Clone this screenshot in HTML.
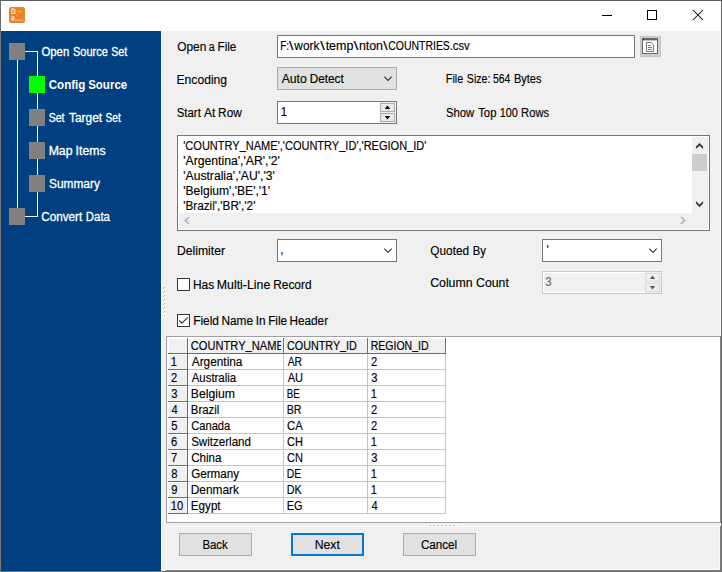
<!DOCTYPE html>
<html>
<head>
<meta charset="utf-8">
<title>Config Source</title>
<style>
*{box-sizing:border-box;margin:0;padding:0}
html,body{width:722px;height:572px;overflow:hidden;background:#fff}
body{position:relative;font-family:"Liberation Sans",sans-serif;font-size:12px;color:#000}
.a{position:absolute}
.t{position:absolute;left:0;width:722px;height:14px;line-height:14px;white-space:nowrap}
.w{position:absolute;left:0;top:0;display:block;line-height:14px;white-space:pre;transform-origin:0 0;-webkit-text-stroke:0.15px}
.u{position:relative;top:-1px}
.sq{position:absolute;width:16px;height:17px;background:#808080}
.ln{position:absolute;background:#fff}
.btn{position:absolute;background:#e1e1e1;border:1px solid #adadad}
.inp{position:absolute;background:#fff;border:1px solid #767676}
.hc{position:absolute;background:#f0f0f0;border-top:1px solid #fff;border-left:1px solid #fff}
.dk{position:absolute;background:#6e6e6e}
.lt{position:absolute;background:#c4c4c4}
svg{position:absolute;overflow:visible}
</style>
</head>
<body>

<!-- window surfaces -->
<div class="a" id="titlebar" style="left:0;top:0;width:722px;height:31px;background:#fff"></div>
<div class="a" id="main" style="left:161px;top:31px;width:559px;height:540px;background:#f0f0f0"></div>
<div class="a" style="left:720px;top:31px;width:1px;height:540px;background:#fff"></div>
<div class="a" style="left:161px;top:31px;width:1px;height:540px;background:#fcfcfc"></div>
<div class="a" id="side" style="left:1px;top:31px;width:160px;height:540px;background:#004080"></div>

<!-- title bar icon -->
<svg id="appicon" style="left:9px;top:7px" width="16" height="16" viewBox="0 0 16 16">
 <rect x="0" y="0" width="16" height="16" rx="2.3" ry="2.3" fill="#e98125"/>
 <path d="M2.3 1.4H5l1.4 1.4V7H2.3Z" fill="#fbe6d2"/>
 <path d="M3.2 2.6H4.6L5.4 3.6V6H3.2Z" fill="#ee9a4f"/>
 <ellipse cx="3.9" cy="9.7" rx="2.1" ry="0.8" fill="#f6c9a0"/>
 <rect x="1.9" y="10.4" width="4" height="3.4" rx="0.8" fill="#f2b47f"/>
 <rect x="3.3" y="10.6" width="1.3" height="2.3" fill="#fdf1e6"/>
 <rect x="8" y="4.1" width="4.6" height="1" fill="#f3b988"/>
 <rect x="7.6" y="7.6" width="1.3" height="1" fill="#f3b988"/>
 <rect x="6.6" y="12.6" width="7.4" height="1.2" fill="#f3b988"/>
</svg>

<!-- window controls -->
<svg style="left:602px;top:10px" width="110" height="12" viewBox="0 0 110 12">
 <path d="M0 5.5H10" stroke="#000" stroke-width="1" fill="none"/>
 <rect x="45.5" y="0.5" width="9" height="9" stroke="#000" stroke-width="1" fill="none"/>
 <path d="M91 0L101 10M101 0L91 10" stroke="#000" stroke-width="1.05" fill="none"/>
</svg>

<!-- sidebar tree -->
<div class="ln" style="left:17px;top:59px;width:1px;height:150px"></div>
<div class="ln" style="left:37px;top:51px;width:1px;height:166px"></div>
<div class="ln" style="left:25px;top:51px;width:12px;height:1px"></div>
<div class="ln" style="left:25px;top:216px;width:12px;height:1px"></div>
<div class="sq" style="left:9px;top:43px"></div>
<div class="sq" style="left:29px;top:76px;background:#00ff00"></div>
<div class="sq" style="left:29px;top:109px"></div>
<div class="sq" style="left:29px;top:142px"></div>
<div class="sq" style="left:29px;top:175px"></div>
<div class="sq" style="left:9px;top:208px"></div>

<!-- splitter grips -->
<div class="a" style="left:162px;top:285px;width:4px;height:33px;background:#f7f7f7"></div>
<svg style="left:163px;top:287px" width="3" height="30" viewBox="0 0 3 30">
 <g fill="#a6a6a6"><rect x="1" y="0" width="1" height="1"/><rect x="1" y="4" width="1" height="1"/><rect x="1" y="8" width="1" height="1"/><rect x="1" y="12" width="1" height="1"/><rect x="1" y="16" width="1" height="1"/><rect x="1" y="20" width="1" height="1"/><rect x="1" y="24" width="1" height="1"/><rect x="1" y="28" width="1" height="1"/></g>
 <g fill="#c4c4c4"><rect x="0" y="1" width="1" height="1"/><rect x="0" y="5" width="1" height="1"/><rect x="0" y="9" width="1" height="1"/><rect x="0" y="13" width="1" height="1"/><rect x="0" y="17" width="1" height="1"/><rect x="0" y="21" width="1" height="1"/><rect x="0" y="25" width="1" height="1"/></g>
</svg>

<!-- row 1: file -->
<div class="inp" style="left:277px;top:35px;width:358px;height:23px"></div>
<div class="a" id="browse" style="left:640px;top:36px;width:21px;height:21px;background:#cfcfcf;border:1px solid #c4c4c4"></div>
<svg style="left:642px;top:38px" width="16" height="16" viewBox="0 0 16 16">
 <rect x="0" y="0" width="16" height="16" fill="#fff"/>
 <rect x="0.5" y="0.5" width="15" height="15" fill="none" stroke="#666" stroke-width="1"/>
 <rect x="0" y="0" width="16" height="2.4" fill="#666"/>
 <rect x="1" y="0.6" width="1" height="1" fill="#222"/>
 <path d="M4.5 4.5H9.2L11.5 6.8V13.5H4.5Z" fill="#fff" stroke="#777" stroke-width="1"/>
 <path d="M6 7.5H9M6 9.5H10M6 11.5H10" stroke="#777" stroke-width="1" fill="none"/>
</svg>

<!-- row 2: encoding combo -->
<div class="btn" style="left:277px;top:67px;width:120px;height:23px"></div>
<svg style="left:277px;top:67px" width="120" height="23" viewBox="0 0 120 23"><path d="M107.3 9.7L111 13.4L114.7 9.7" stroke="#333" stroke-width="1.1" fill="none"/></svg>

<!-- row 3: spin -->
<div class="inp" style="left:277px;top:101px;width:120px;height:23px"></div>
<div class="a" style="left:380px;top:102px;width:16px;height:21px;background:#f0f0f0"></div>
<div class="a" style="left:380px;top:103px;width:15px;height:9px;background:#e9e9e9;border:1px solid #adadad"></div>
<div class="a" style="left:380px;top:113px;width:15px;height:9px;background:#e9e9e9;border:1px solid #adadad"></div>
<svg style="left:380px;top:103px" width="15" height="19" viewBox="0 0 15 19">
 <path d="M7.5 2.4L10.2 5.9H4.8Z" fill="#000"/>
 <path d="M7.5 16.4L10.2 12.9H4.8Z" fill="#000"/>
</svg>

<!-- text area -->
<div class="inp" id="ta" style="left:177px;top:135px;width:533px;height:96px"></div>
<div class="a" style="left:179px;top:213px;width:529px;height:16px;background:#f0f0f0"></div>
<div class="a" style="left:692px;top:137px;width:16px;height:92px;background:#f0f0f0"></div>
<div class="a" style="left:692px;top:154px;width:15px;height:17px;background:#cdcdcd"></div>
<svg style="left:692px;top:137px" width="16" height="76" viewBox="0 0 16 76">
 <path d="M3.9 12.1V9.6L7.5 5.9L11.1 9.6V12.1L7.5 8.7Z" fill="#3a3a3a"/>
 <path d="M3.9 64V66.5L7.5 70.2L11.1 66.5V64L7.5 67.4Z" fill="#3a3a3a"/>
</svg>
<svg style="left:179px;top:213px" width="513" height="16" viewBox="0 0 513 16">
 <path d="M11.1 3.9H8.6L4.9 7.5L8.6 11.1H11.1L7.7 7.5Z" fill="#b8b8b8"/>
 <path d="M500.9 3.9H503.4L507.1 7.5L503.4 11.1H500.9L504.3 7.5Z" fill="#b8b8b8"/>
</svg>

<!-- delimiter / quoted by combos -->
<div class="inp" style="left:277px;top:239px;width:120px;height:23px"></div>
<svg style="left:277px;top:239px" width="120" height="23" viewBox="0 0 120 23"><path d="M107.3 9.7L111 13.4L114.7 9.7" stroke="#333" stroke-width="1.1" fill="none"/></svg>
<div class="inp" style="left:542px;top:239px;width:120px;height:23px"></div>
<svg style="left:542px;top:239px" width="120" height="23" viewBox="0 0 120 23"><path d="M107.3 9.7L111 13.4L114.7 9.7" stroke="#333" stroke-width="1.1" fill="none"/></svg>

<!-- column count (disabled spin) -->
<div class="a" style="left:542px;top:271px;width:120px;height:23px;background:#f0f0f0;border:1px solid #c9c9c9"></div>
<div class="a" style="left:543px;top:272px;width:102px;height:21px;border:1px solid #fff;border-right:0"></div>
<div class="a" style="left:645px;top:273px;width:15px;height:9px;background:#efefef;border:1px solid #dadada"></div>
<div class="a" style="left:645px;top:283px;width:15px;height:9px;background:#efefef;border:1px solid #dadada"></div>
<svg style="left:645px;top:273px" width="15" height="19" viewBox="0 0 15 19">
 <path d="M7.5 2.4L10.2 5.9H4.8Z" fill="#5a5a5a"/>
 <path d="M7.5 16.4L10.2 12.9H4.8Z" fill="#5a5a5a"/>
</svg>

<!-- checkboxes -->
<div class="a" style="left:177px;top:278px;width:13px;height:13px;background:#fff;border:1px solid #333"></div>
<div class="a" style="left:177px;top:314px;width:13px;height:13px;background:#fff;border:1px solid #333"></div>
<svg style="left:177px;top:314px" width="13" height="13" viewBox="0 0 13 13"><path d="M2.3 6.4L4.9 9.2L10.8 3.3" stroke="#333" stroke-width="1.2" fill="none"/></svg>

<div class="a" id="tatext" style="left:179px;top:137px;width:513px;height:76px;overflow:hidden">
<div class="w" style="top:2px;transform:translateX(4.26px) scaleX(0.9185)">&#x27;COUNTRY<span class="u">_</span>NAME&#x27;,&#x27;COUNTRY<span class="u">_</span>ID&#x27;,&#x27;REGION<span class="u">_</span>ID&#x27;</div>
<div class="w" style="top:17px;transform:translateX(4.22px) scaleX(1.0162)">&#x27;Argentina&#x27;,&#x27;AR&#x27;,&#x27;2&#x27;</div>
<div class="w" style="top:32px;transform:translateX(4.22px) scaleX(1.0128)">&#x27;Australia&#x27;,&#x27;AU&#x27;,&#x27;3&#x27;</div>
<div class="w" style="top:47px;transform:translateX(4.22px) scaleX(1.0053)">&#x27;Belgium&#x27;,&#x27;BE&#x27;,&#x27;1&#x27;</div>
<div class="w" style="top:62px;transform:translateX(4.24px) scaleX(0.9780)">&#x27;Brazil&#x27;,&#x27;BR&#x27;,&#x27;2&#x27;</div>
</div>
<!-- grid panel -->
<div class="a" id="gridpanel" style="left:166px;top:336px;width:555px;height:187px;background:#fff;border:1px solid #a0a0a7"></div>
<div class="hc" style="left:168px;top:338px;width:19px;height:15px"></div>
<div class="hc" style="left:188px;top:338px;width:95px;height:15px"></div>
<div class="hc" style="left:284px;top:338px;width:83px;height:15px"></div>
<div class="hc" style="left:368px;top:338px;width:77px;height:15px"></div>
<div class="hc" style="left:168px;top:354px;width:19px;height:15px"></div>
<div class="hc" style="left:168px;top:370px;width:19px;height:15px"></div>
<div class="hc" style="left:168px;top:386px;width:19px;height:15px"></div>
<div class="hc" style="left:168px;top:402px;width:19px;height:15px"></div>
<div class="hc" style="left:168px;top:418px;width:19px;height:15px"></div>
<div class="hc" style="left:168px;top:434px;width:19px;height:15px"></div>
<div class="hc" style="left:168px;top:450px;width:19px;height:15px"></div>
<div class="hc" style="left:168px;top:466px;width:19px;height:15px"></div>
<div class="hc" style="left:168px;top:482px;width:19px;height:15px"></div>
<div class="hc" style="left:168px;top:498px;width:19px;height:15px"></div>
<div class="dk" style="left:168px;top:353px;width:278px;height:1px"></div>
<div class="dk" style="left:187px;top:338px;width:1px;height:16px"></div>
<div class="dk" style="left:283px;top:338px;width:1px;height:16px"></div>
<div class="dk" style="left:367px;top:338px;width:1px;height:16px"></div>
<div class="dk" style="left:445px;top:338px;width:1px;height:16px"></div>
<div class="dk" style="left:187px;top:354px;width:1px;height:160px"></div>
<div class="dk" style="left:168px;top:369px;width:20px;height:1px"></div>
<div class="lt" style="left:188px;top:369px;width:258px;height:1px"></div>
<div class="dk" style="left:168px;top:385px;width:20px;height:1px"></div>
<div class="lt" style="left:188px;top:385px;width:258px;height:1px"></div>
<div class="dk" style="left:168px;top:401px;width:20px;height:1px"></div>
<div class="lt" style="left:188px;top:401px;width:258px;height:1px"></div>
<div class="dk" style="left:168px;top:417px;width:20px;height:1px"></div>
<div class="lt" style="left:188px;top:417px;width:258px;height:1px"></div>
<div class="dk" style="left:168px;top:433px;width:20px;height:1px"></div>
<div class="lt" style="left:188px;top:433px;width:258px;height:1px"></div>
<div class="dk" style="left:168px;top:449px;width:20px;height:1px"></div>
<div class="lt" style="left:188px;top:449px;width:258px;height:1px"></div>
<div class="dk" style="left:168px;top:465px;width:20px;height:1px"></div>
<div class="lt" style="left:188px;top:465px;width:258px;height:1px"></div>
<div class="dk" style="left:168px;top:481px;width:20px;height:1px"></div>
<div class="lt" style="left:188px;top:481px;width:258px;height:1px"></div>
<div class="dk" style="left:168px;top:497px;width:20px;height:1px"></div>
<div class="lt" style="left:188px;top:497px;width:258px;height:1px"></div>
<div class="dk" style="left:168px;top:513px;width:20px;height:1px"></div>
<div class="lt" style="left:188px;top:513px;width:258px;height:1px"></div>
<div class="lt" style="left:283px;top:354px;width:1px;height:160px"></div>
<div class="lt" style="left:367px;top:354px;width:1px;height:160px"></div>
<div class="lt" style="left:445px;top:354px;width:1px;height:160px"></div>

<div class="a" style="left:188px;top:339px;width:93px;height:14px;overflow:hidden"><span class="w" style="transform:translateX(2.76px) scaleX(0.9270)">COUNTRY<span class="u">_</span>NAME</span></div>
<div class="t" style="top:339px"><span class="w" style="transform:translateX(287.07px) scaleX(0.8970)">COUNTRY<span class="u">_</span>ID</span> <span class="w" style="transform:translateX(370.65px) scaleX(0.8781)">REGION<span class="u">_</span>ID</span></div>
<div class="t" style="top:355px"><span class="w" style="transform:translateX(170.83px) scaleX(0.9300)">1</span> <span class="w" style="transform:translateX(191.75px) scaleX(0.9869)">Argentina</span> <span class="w" style="transform:translateX(287.63px) scaleX(0.8645)">AR</span> <span class="w" style="transform:translateX(371.06px) scaleX(0.9300)">2</span></div>
<div class="t" style="top:371px"><span class="w" style="transform:translateX(171.06px) scaleX(0.9300)">2</span> <span class="w" style="transform:translateX(191.74px) scaleX(0.9505)">Australia</span> <span class="w" style="transform:translateX(287.64px) scaleX(0.9283)">AU</span> <span class="w" style="transform:translateX(371.17px) scaleX(0.9300)">3</span></div>
<div class="t" style="top:387px"><span class="w" style="transform:translateX(171.17px) scaleX(0.9300)">3</span> <span class="w" style="transform:translateX(190.73px) scaleX(1.0215)">Belgium</span> <span class="w" style="transform:translateX(286.81px) scaleX(0.8176)">BE</span> <span class="w" style="transform:translateX(370.83px) scaleX(0.9300)">1</span></div>
<div class="t" style="top:403px"><span class="w" style="transform:translateX(171.41px) scaleX(0.9300)">4</span> <span class="w" style="transform:translateX(190.79px) scaleX(0.9492)">Brazil</span> <span class="w" style="transform:translateX(286.75px) scaleX(0.8882)">BR</span> <span class="w" style="transform:translateX(371.06px) scaleX(0.9300)">2</span></div>
<div class="t" style="top:419px"><span class="w" style="transform:translateX(171.17px) scaleX(0.9300)">5</span> <span class="w" style="transform:translateX(191.16px) scaleX(0.9310)">Canada</span> <span class="w" style="transform:translateX(287.05px) scaleX(0.9387)">CA</span> <span class="w" style="transform:translateX(371.06px) scaleX(0.9300)">2</span></div>
<div class="t" style="top:435px"><span class="w" style="transform:translateX(171.06px) scaleX(0.9300)">6</span> <span class="w" style="transform:translateX(191.14px) scaleX(0.9651)">Switzerland</span> <span class="w" style="transform:translateX(287.06px) scaleX(0.9170)">CH</span> <span class="w" style="transform:translateX(370.83px) scaleX(0.9300)">1</span></div>
<div class="t" style="top:451px"><span class="w" style="transform:translateX(171.06px) scaleX(0.9300)">7</span> <span class="w" style="transform:translateX(191.14px) scaleX(0.9694)">China</span> <span class="w" style="transform:translateX(287.06px) scaleX(0.9170)">CN</span> <span class="w" style="transform:translateX(371.17px) scaleX(0.9300)">3</span></div>
<div class="t" style="top:467px"><span class="w" style="transform:translateX(171.17px) scaleX(0.9300)">8</span> <span class="w" style="transform:translateX(191.14px) scaleX(0.9709)">Germany</span> <span class="w" style="transform:translateX(286.77px) scaleX(0.8622)">DE</span> <span class="w" style="transform:translateX(370.83px) scaleX(0.9300)">1</span></div>
<div class="t" style="top:483px"><span class="w" style="transform:translateX(171.17px) scaleX(0.9300)">9</span> <span class="w" style="transform:translateX(190.76px) scaleX(0.9911)">Denmark</span> <span class="w" style="transform:translateX(286.74px) scaleX(0.8987)">DK</span> <span class="w" style="transform:translateX(370.83px) scaleX(0.9300)">1</span></div>
<div class="t" style="top:499px"><span class="w" style="transform:translateX(170.83px) scaleX(0.9300)">10</span> <span class="w" style="transform:translateX(190.77px) scaleX(0.9724)">Egypt</span> <span class="w" style="transform:translateX(286.72px) scaleX(0.9170)">EG</span> <span class="w" style="transform:translateX(371.41px) scaleX(0.9300)">4</span></div>
<!-- bottom button panel -->
<div class="a" style="left:166px;top:526px;width:554px;height:1px;background:#fff"></div>
<div class="a" style="left:166px;top:526px;width:1px;height:44px;background:#fff"></div>
<div class="a" style="left:166px;top:569px;width:554px;height:1px;background:#fbfbfb"></div>
<div class="a" style="left:719px;top:526px;width:1px;height:44px;background:#fbfbfb"></div>
<div class="a" style="left:166px;top:570px;width:555px;height:1px;background:#808080"></div>
<div class="a" style="left:720px;top:526px;width:1px;height:45px;background:#808080"></div>
<div class="a" style="left:720px;top:336px;width:1px;height:187px;background:#84848a"></div>
<div class="a" style="left:428px;top:524px;width:31px;height:2px;background:#fafafa"></div>
<svg style="left:429px;top:525px" width="31" height="1" viewBox="0 0 31 1">
 <g fill="#a6a6a6"><rect x="1" y="0" width="1" height="1"/><rect x="5" y="0" width="1" height="1"/><rect x="9" y="0" width="1" height="1"/><rect x="13" y="0" width="1" height="1"/><rect x="17" y="0" width="1" height="1"/><rect x="21" y="0" width="1" height="1"/><rect x="25" y="0" width="1" height="1"/></g>
 <g fill="#d2d2d2"><rect x="0" y="0" width="1" height="1"/><rect x="4" y="0" width="1" height="1"/><rect x="8" y="0" width="1" height="1"/><rect x="12" y="0" width="1" height="1"/><rect x="16" y="0" width="1" height="1"/><rect x="20" y="0" width="1" height="1"/><rect x="24" y="0" width="1" height="1"/><rect x="29" y="0" width="1" height="1"/></g>
</svg>
<div class="btn" style="left:179px;top:533px;width:73px;height:23px"></div>
<div class="btn" style="left:291px;top:533px;width:73px;height:23px;border:2px solid #0078d7"></div>
<div class="btn" style="left:403px;top:533px;width:73px;height:23px"></div>


<div class="t" id="s1" style="top:45px;color:#fff"><span class="w" style="transform:translateX(41.40px) scaleX(0.9471);-webkit-text-stroke:0.3px">Open</span> <span class="w" style="transform:translateX(72.94px) scaleX(0.9212);-webkit-text-stroke:0.3px">Source</span> <span class="w" style="transform:translateX(111.25px) scaleX(0.8855);-webkit-text-stroke:0.3px">Set</span></div>
<div class="t" id="s2" style="top:78px;color:#fff;font-weight:bold"><span class="w" style="transform:translateX(48.70px) scaleX(0.9646);-webkit-text-stroke:0">Config</span> <span class="w" style="transform:translateX(88.14px) scaleX(0.9603);-webkit-text-stroke:0">Source</span></div>
<div class="t" id="s3" style="top:111px;color:#fff"><span class="w" style="transform:translateX(48.66px) scaleX(0.8798);-webkit-text-stroke:0.3px">Set</span> <span class="w" style="transform:translateX(68.93px) scaleX(0.9955);-webkit-text-stroke:0.3px">Target</span> <span class="w" style="transform:translateX(105.50px) scaleX(0.8487);-webkit-text-stroke:0.3px">Set</span></div>
<div class="t" id="s4" style="top:144px;color:#fff"><span class="w" style="transform:translateX(48.64px) scaleX(1.0225);-webkit-text-stroke:0.3px">Map</span> <span class="w" style="transform:translateX(75.59px) scaleX(1.0205);-webkit-text-stroke:0.3px">Items</span></div>
<div class="t" id="s5" style="top:177px;color:#fff"><span class="w" style="transform:translateX(49.03px) scaleX(0.9897);-webkit-text-stroke:0.3px">Summary</span></div>
<div class="t" id="s6" style="top:210px;color:#fff"><span class="w" style="transform:translateX(41.22px) scaleX(0.9749);-webkit-text-stroke:0.3px">Convert</span> <span class="w" style="transform:translateX(85.81px) scaleX(0.9511);-webkit-text-stroke:0.3px">Data</span></div>
<div class="t" id="l1" style="top:40px"><span class="w" style="transform:translateX(177.25px) scaleX(0.9878)">Open</span> <span class="w" style="transform:translateX(208.83px) scaleX(0.8907)">a</span> <span class="w" style="transform:translateX(217.51px) scaleX(0.9763)">File</span></div>
<div class="t" id="v1" style="top:39px"><span class="w" style="transform:translateX(280.30px) scaleX(0.8179)">F:</span><span class="w" style="transform:translateX(289.10px) scaleX(1.3061)">\</span><span class="w" style="transform:translateX(294.35px) scaleX(0.9854)">work</span><span class="w" style="transform:translateX(320.30px) scaleX(1.3605)">\</span><span class="w" style="transform:translateX(325.63px) scaleX(1.0418)">temp</span><span class="w" style="transform:translateX(353.80px) scaleX(1.3605)">\</span><span class="w" style="transform:translateX(358.88px) scaleX(1.0327)">nton</span><span class="w" style="transform:translateX(383.30px) scaleX(1.3061)">\</span><span class="w" style="transform:translateX(388.19px) scaleX(0.8725)">COUNTRIES</span><span class="w" style="transform:translateX(449.68px) scaleX(0.9400)">.csv</span></div>
<div class="t" id="l2" style="top:73px"><span class="w" style="transform:translateX(176.54px) scaleX(1.0093)">Encoding</span></div>
<div class="t" id="v2" style="top:72px"><span class="w" style="transform:translateX(281.67px) scaleX(1.0137)">Auto</span> <span class="w" style="transform:translateX(309.64px) scaleX(0.9828)">Detect</span></div>
<div class="t" id="l2b" style="top:72px"><span class="w" style="transform:translateX(445.86px) scaleX(0.8953)">File</span> <span class="w" style="transform:translateX(466.83px) scaleX(0.8813)">Size:</span> <span class="w" style="transform:translateX(492.93px) scaleX(0.8661)">564</span> <span class="w" style="transform:translateX(513.91px) scaleX(0.9202)">Bytes</span></div>
<div class="t" id="l3" style="top:106px"><span class="w" style="transform:translateX(176.77px) scaleX(0.9494)">Start</span> <span class="w" style="transform:translateX(203.88px)">At</span> <span class="w" style="transform:translateX(218.10px) scaleX(0.9838)">Row</span></div>
<div class="t" id="v3" style="top:105px"><span class="w" style="transform:translateX(280.71px) scaleX(0.9500)">1</span></div>
<div class="t" id="l3b" style="top:106px"><span class="w" style="transform:translateX(445.97px) scaleX(0.9390)">Show</span> <span class="w" style="transform:translateX(478.20px) scaleX(0.9411)">Top</span> <span class="w" style="transform:translateX(499.79px) scaleX(0.9041)">100</span> <span class="w" style="transform:translateX(521.05px) scaleX(0.9340)">Rows</span></div>
<div class="t" id="l4" style="top:244px"><span class="w" style="transform:translateX(176.94px) scaleX(1.0145)">Delimiter</span></div>
<div class="t" id="v4" style="top:243px"><span class="w" style="transform:translateX(280.37px) scaleX(0.9500)">,</span></div>
<div class="t" id="l4b" style="top:244px"><span class="w" style="transform:translateX(430.34px) scaleX(0.9838)">Quoted</span> <span class="w" style="transform:translateX(472.69px) scaleX(0.9413)">By</span></div>
<div class="t" id="v4b" style="top:243px"><span class="w" style="transform:translateX(546.55px) scaleX(0.9500)">&#x27;</span></div>
<div class="t" id="l5" style="top:278px"><span class="w" style="transform:translateX(192.92px) scaleX(0.9951)">Has</span> <span class="w" style="transform:translateX(216.81px) scaleX(1.0280)">Multi-Line</span> <span class="w" style="transform:translateX(273.21px) scaleX(0.9899)">Record</span></div>
<div class="t" id="l5b" style="top:276px"><span class="w" style="transform:translateX(430.15px) scaleX(1.0256)">Column</span> <span class="w" style="transform:translateX(476.08px) scaleX(1.0218)">Count</span></div>
<div class="t" id="v5" style="top:275px;color:#6d6d6d"><span class="w" style="transform:translateX(545.27px) scaleX(0.9500)">3</span></div>
<div class="t" id="l6" style="top:314px"><span class="w" style="transform:translateX(193.13px) scaleX(0.9917)">Field</span> <span class="w" style="transform:translateX(221.42px) scaleX(0.9895)">Name</span> <span class="w" style="transform:translateX(255.82px) scaleX(0.9794)">In</span> <span class="w" style="transform:translateX(268.14px) scaleX(0.9830)">File</span> <span class="w" style="transform:translateX(289.47px) scaleX(0.9807)">Header</span></div>
<div class="t" id="b1" style="top:538px"><span class="w" style="transform:translateX(202.39px) scaleX(0.9527)">Back</span></div>
<div class="t" id="b2" style="top:538px"><span class="w" style="transform:translateX(314.63px) scaleX(1.0199)">Next</span></div>
<div class="t" id="b3" style="top:538px"><span class="w" style="transform:translateX(420.94px) scaleX(0.9703)">Cancel</span></div>
<!-- window border -->
<div class="a" style="left:0;top:0;width:722px;height:1px;background:#5c5c5c"></div>
<div class="a" style="left:0;top:571px;width:722px;height:1px;background:#6e6e6e"></div>
<div class="a" style="left:0;top:0;width:1px;height:31px;background:#6a6a6a"></div>
<div class="a" style="left:0;top:31px;width:1px;height:541px;background:#7a7570"></div>
<div class="a" style="left:721px;top:0;width:1px;height:572px;background:#6a6a6a"></div>

</body>
</html>
